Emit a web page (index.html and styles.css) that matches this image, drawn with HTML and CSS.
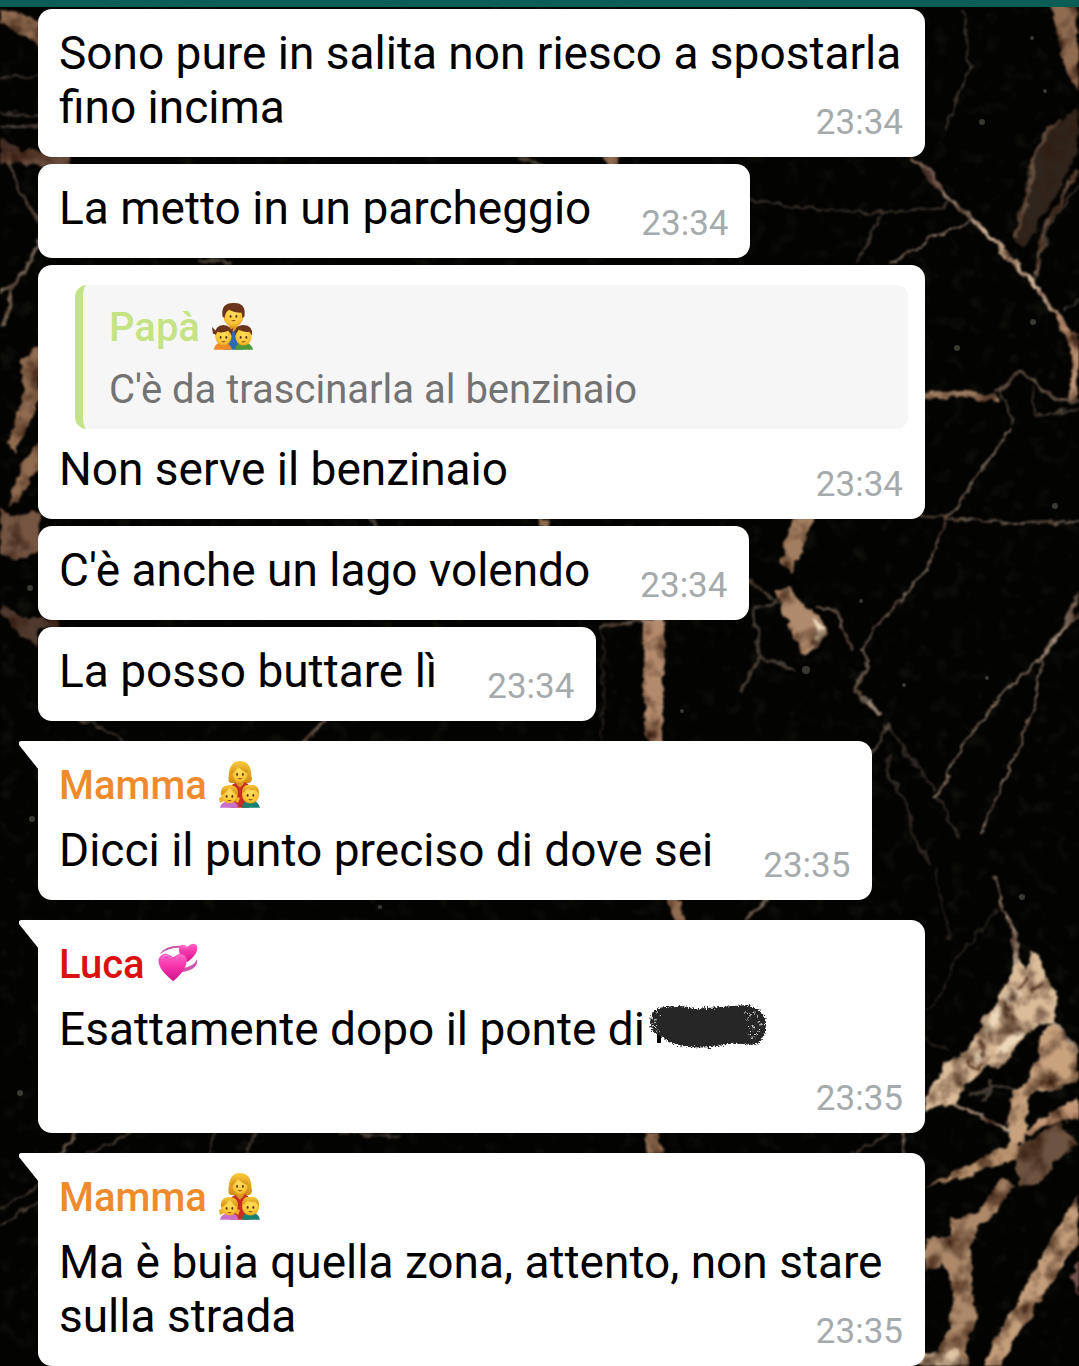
FILE: index.html
```html
<!DOCTYPE html>
<html lang="it">
<head>
	<meta charset="UTF-8">
	<meta name="viewport" content="width=device-width, initial-scale=1">
	<title>Chat</title>
	<link rel="stylesheet" href="styles.css">
</head>
<body>
	<!-- marble wallpaper -->
	<svg class="wallpaper" viewBox="0 0 1079 1366" preserveAspectRatio="xMidYMin slice" aria-hidden="true">
		<defs>
			<filter id="rough" x="0" y="0" width="1079" height="1366" filterUnits="userSpaceOnUse" color-interpolation-filters="sRGB">
				<feTurbulence type="fractalNoise" baseFrequency="0.08" numOctaves="3" seed="4" result="n"/>
				<feDisplacementMap in="SourceGraphic" in2="n" scale="10" xChannelSelector="R" yChannelSelector="G" result="d"/>
				<feTurbulence type="fractalNoise" baseFrequency="0.043" numOctaves="4" seed="9" result="g"/>
				<feColorMatrix in="g" type="matrix" values="0 0 0 0 0.2  0 0 0 0 0.1  0 0 0 0 0.05  2.4 0 0 0 -1.05" result="dark"/>
				<feComposite in="dark" in2="d" operator="in" result="shade"/>
				<feMerge result="m"><feMergeNode in="d"/><feMergeNode in="shade"/></feMerge>
				<feGaussianBlur in="m" stdDeviation="0.9"/>
			</filter>
			<filter id="specks" x="0" y="0" width="1079" height="1366" filterUnits="userSpaceOnUse" color-interpolation-filters="sRGB">
				<feTurbulence type="fractalNoise" baseFrequency="0.06" numOctaves="3" seed="21"/>
				<feColorMatrix type="matrix" values="0 0 0 0 0.2  0 0 0 0 0.2  0 0 0 0 0.15  2 0 0 0 -1.1"/>
				<feGaussianBlur stdDeviation="1"/>
			</filter>
		</defs>
		<rect width="1079" height="1366" fill="#030302"/>
		<rect width="1079" height="1366" filter="url(#specks)" opacity=".4"/>
		<g filter="url(#rough)">
			<g fill="#8f6b50">
				<path d="M1050 5L1076 5L1079 92L1066 70Z"/>
				<path d="M1079 105L1065 118L1045 135L1030 160L1024 195L1012 240L1024 246L1045 212L1060 190L1070 165L1079 150Z" fill="#2f251d"/>
				<path d="M1060 118L1045 135L1034 155L1028 195L1015 238M1077 170L1060 205L1046 225L1036 275" fill="none" stroke="#66503f" stroke-width="4"/>
				<path d="M0 10L20 12L40 24V48L22 34L0 24Z"/>
				<path d="M0 138L20 145L22 158L0 165Z" fill="#49332b"/>
				<path d="M0 154L40 150L70 156V166H40L0 162Z" fill="#684b3b"/>
				<path d="M40 346L22 360L24 390L8 445L16 452L40 398Z"/>
				<path d="M40 440L22 460L8 506L18 502L40 465Z"/>
				<path d="M0 508L14 516L40 512V550L18 562L0 552Z" fill="#745643"/>
				<path d="M0 604L28 618L60 618V628L38 630V646L20 636L0 612Z" fill="#503a2e"/>
				<path d="M794 516L815 516L792 574L779 562Z" fill="#a27d60"/>
				<path d="M777 590L790 587L804 606L820 616L827 632L820 647L803 654L792 640Z" fill="#b08a6c"/>
				<path d="M813 620L824 628L823 642L812 647L818 636Z" fill="#f0dfc2"/>
				<path d="M643 618L665 618L662 742L647 742L642 690Z" fill="#b38a6c"/>
				<path d="M666 898L680 898L686 922L674 922Z"/>
				<path d="M644 1131H658L664 1154H648Z"/>
				<path d="M606 156H622L618 166H608Z"/>
				<path d="M538 519H552L548 527H540Z"/>
			</g>
			<g fill="#dbbd9a">
				<path d="M1016 960L1028 967L1033 951L1042 960L1046 975L1058 998L1056 1022L1036 1026L1020 1040L1003 1065L985 1068L966 1083L957 1103L925 1112V1098L945 1064L965 1050L988 1015L1006 985Z"/>
				<path d="M1040 1032L1056 1022L1079 1055V1078L1060 1088L1030 1094L1024 1144H1008L1012 1092L1030 1080L1039 1056Z" fill="#c8a17d"/>
				<path d="M1079 1098L1050 1112L1022 1132L1030 1134L1060 1122L1079 1120Z" fill="#c79a79"/>
				<path d="M925 1186L962 1170L1000 1148L1016 1142L1018 1158L975 1174Z" fill="#b9926f"/>
				<path d="M1018 1146L1045 1132L1060 1122L1079 1144L1055 1160L1043 1184L1018 1184Z" fill="#6d5440"/>
				<path d="M1000 1177L1014 1186L998 1210L979 1226L970 1250L972 1290L978 1320L966 1336L968 1366H925L938 1352L950 1330L953 1290L944 1262L925 1272V1238L950 1236L950 1218L978 1214Z" fill="#ad896a"/>
				<path d="M1079 1192V1242L1042 1296L1000 1366H982L1012 1310L1045 1250Z" fill="#c49e7b"/>
				<path d="M1079 1250L1072 1280L1079 1295Z" fill="#71504b"/>
				<path d="M925 1352L958 1350L966 1366H920Z" fill="#e0c6a5"/>
			</g>
			<path d="M985 1035L1000 1010L1020 990M1000 1052L1022 1030M975 1062L985 1050" fill="none" stroke="#f5e6c8" stroke-width="8" opacity=".7"/>
			<path d="M1018 988L1028 978M1030 992L1042 984M1004 1002L1010 1012M980 1040L984 1056M966 1062L978 1068L986 1064" fill="none" stroke="#58321e" stroke-width="3" opacity=".8"/>
			<g fill="none" stroke="#b09a86" stroke-linecap="round" stroke-linejoin="round">
				<path stroke-width="4" opacity=".8" d="M912 160L928 168L945 195L975 222"/>
				<path stroke-width="5" stroke="#cfb397" d="M975 222L1010 257L1035 286L1055 312"/>
				<path stroke-width="9" stroke="#bd9274" d="M1058 318L1079 348M1077 350L1072 395"/>
				<path stroke-width="8" stroke="#68493d" opacity=".7" d="M926 170L938 186"/>
				<path stroke-width="2" opacity=".75" d="M890 265L935 236L975 222"/>
				<path stroke-width="2" opacity=".35" d="M752 199L800 208L880 213L945 207L948 195M963 10L970 68L945 130M857 264L880 216M1035 280L1050 225L1079 185M1065 310L1079 300"/>
				<path stroke-width="6" stroke="#9c7b60" d="M922 396L965 394L996 399"/>
				<path stroke-width="4" opacity=".55" d="M996 393L1020 371L1038 384L1055 398L1079 402"/>
				<path stroke-width="2" opacity=".4" d="M1000 388L1012 424M1032 390L1034 415L1079 410"/>
				<path stroke-width="2" opacity=".7" d="M1012 428L985 465L960 500L945 522L928 568L904 596L875 628L862 650"/>
				<path stroke-width="3" opacity=".6" d="M862 650L867 665L854 692L880 713M815 605L836 611L852 650"/>
				<path stroke-width="6" opacity=".8" d="M870 703L880 712"/>
				<path stroke-width="2" opacity=".6" d="M920 516L962 520L1010 523L1079 522"/>
				<path stroke-width="3" opacity=".4" d="M750 582L778 602L754 606L759 656L742 690M759 656L795 669M888 725L872 755"/>
				<path stroke-width="4" opacity=".7" d="M1079 592L1066 625L1042 656"/>
				<path stroke-width="2" opacity=".8" d="M1079 612L1042 656L1002 695L966 740L936 797"/>
				<path stroke-width="2" opacity=".75" d="M1042 660L1033 708L1008 770L981 833"/>
				<path stroke-width="3" opacity=".25" d="M936 797L946 812L957 838M890 755L885 770L903 795L912 830L930 865M888 728L935 790"/>
				<path stroke-width="5" opacity=".9" d="M1008 918L1016 940L1016 964"/>
				<path stroke-width="2" opacity=".8" d="M995 878L1003 908L1008 918"/>
				<path stroke-width="2" opacity=".2" d="M998 910L955 960L945 990L925 1010M935 870L950 940M925 1038L948 1050"/>
				<path stroke-width="4" d="M955 1104L985 1118L1010 1132M1055 1024L1079 1052"/>
				<path stroke-width="3" opacity=".4" d="M970 1096L995 1086L1015 1090M985 1100L992 1080"/>
				<path stroke-width="3" opacity=".5" d="M602 627L640 621L665 621"/>
				<path stroke-width="2" opacity=".2" d="M603 625L602 740"/>
				<path stroke-width="2" opacity=".35" d="M0 78L38 76M0 112L38 116"/>
				<path stroke-width="3" opacity=".45" d="M0 127L38 126M8 155L18 185L38 222"/>
				<path stroke-width="4" opacity=".65" d="M40 240L22 275L12 290L4 325M16 282L0 292"/>
				<path stroke-width="3" opacity=".65" d="M324 719L304 744M768 898L740 922M78 1130L60 1156M904 1130L905 1156"/>
				<path stroke-width="2" opacity=".4" d="M80 721L110 730L125 742M134 1132L88 1154M215 1131L208 1154M255 1132L246 1154M340 1134L400 1136M0 1210L40 1184M0 1226L40 1202M850 1154L888 1135"/>
				<path stroke-width="4" opacity=".4" d="M370 519L378 527M520 158L540 165M200 260L230 262"/>
			</g>
		</g>
		<g fill="#a19d8a" opacity=".35">
			<circle cx="982" cy="122" r="3"/><circle cx="1033" cy="322" r="3"/><circle cx="1055" cy="506" r="3"/><circle cx="1045" cy="91" r="2"/>
			<circle cx="1032" cy="38" r="2"/><circle cx="957" cy="348" r="3"/><circle cx="904" cy="685" r="2"/><circle cx="987" cy="678" r="2"/>
			<circle cx="32" cy="819" r="3"/><circle cx="20" cy="1093" r="3"/><circle cx="682" cy="711" r="2"/><circle cx="1022" cy="897" r="3"/>
			<circle cx="806" cy="670" r="4"/><circle cx="861" cy="601" r="2"/><circle cx="30" cy="588" r="3"/><circle cx="380" cy="907" r="2"/>
		</g>
	</svg>

	<!-- emoji -->
	<svg class="sprite" aria-hidden="true">
		<defs>
			<radialGradient id="skin" cx=".5" cy=".4" r=".65">
				<stop offset="0" stop-color="#ffdf60"/><stop offset=".7" stop-color="#fbc534"/><stop offset="1" stop-color="#dd9416"/>
			</radialGradient>
			<linearGradient id="hair" x1="0" y1="0" x2="0" y2="1">
				<stop offset="0" stop-color="#f9c93a"/><stop offset="1" stop-color="#d08a12"/>
			</linearGradient>
			<linearGradient id="pink" x1="0" y1="0" x2="0" y2="1">
				<stop offset="0" stop-color="#ff62c6"/><stop offset=".5" stop-color="#f531a9"/><stop offset="1" stop-color="#cf128b"/>
			</linearGradient>
			<g id="face">
				<ellipse cx="-3" cy="0" rx="1" ry="1.4" fill="#583313"/>
				<ellipse cx="3" cy="0" rx="1" ry="1.4" fill="#583313"/>
				<path d="M-2.6 4Q0 6.4 2.6 4Z" fill="#7b3b13"/>
			</g>
			<symbol id="father" viewBox="0 0 44 50">
				<path d="M12 50V32Q14 26 22 26T32 32V50Z" fill="#2d69b7"/>
				<path d="M18 21H27V27L22 31L18 27Z" fill="#dc9b22"/>
				<ellipse cx="22.500" cy="14" rx="10.500" ry="12" fill="url(#skin)"/>
				<path d="M11 15Q9 1 22 1Q36 0 34 15L32 17L31 11Q23 11 18 8Q14 10 13 17Z" fill="#6b351b"/>
				<use href="#face" x="22.500" y="15"/>
				<path d="M2 50Q3 42 11 42T21 50Z" fill="#f28a28"/>
				<path d="M24 50Q25 42 33 42T43 50Z" fill="#4f9b3a"/>
				<path d="M4 30L0 26L1 33L5 34M18 30L22 27L21 33Z" fill="#6b351b"/>
				<ellipse cx="12" cy="36" rx="8.500" ry="9.500" fill="url(#skin)"/>
				<path d="M3 35Q3 24 12 24T21 35L17 30Q10 33 6 31Z" fill="#6b351b"/>
				<ellipse cx="33" cy="36" rx="8.500" ry="9.500" fill="url(#skin)"/>
				<path d="M24 35Q23 24 33 24T42 35L39 31Q33 32 28 29Z" fill="#6b351b"/>
				<use href="#face" x="12" y="37"/>
				<use href="#face" x="33" y="37"/>
			</symbol>
			<symbol id="mother" viewBox="0 0 44 50">
				<path d="M10 22Q9 1 22 1Q34 1 34 17Q36 21 32 24H12Z" fill="url(#hair)"/>
				<path d="M12 50V30Q12 24 22 23T32 30V50Z" fill="#c82c23"/>
				<path d="M18 20H26V25L22 29L18 25Z" fill="#d99522"/>
				<ellipse cx="22" cy="14" rx="8" ry="10" fill="url(#skin)"/>
				<path d="M13 15Q12 4 20 3Q30 2 31 14Q24 12 20 7Q17 12 13 15Z" fill="url(#hair)"/>
				<use href="#face" x="22" y="15"/>
				<path d="M1 50Q2 43 11 43T20 50Z" fill="#c970ce"/>
				<path d="M24 50Q25 42 33 42T43 50Z" fill="#17816f"/>
				<path d="M3 38L0 40L1 45L5 43M18 38L22 40L20 45L17 43Z" fill="#eab027"/>
				<ellipse cx="11" cy="36" rx="8.500" ry="9.500" fill="url(#skin)"/>
				<path d="M2 37Q1 26 11 26T20 37Q15 35 11 28Q8 35 2 37Z" fill="url(#hair)"/>
				<ellipse cx="33" cy="36" rx="9" ry="9.500" fill="url(#skin)"/>
				<path d="M24 35Q24 25 33 26Q42 25 42 35L38 31Q34 32 30 30Z" fill="url(#hair)"/>
				<use href="#face" x="11" y="38"/>
				<use href="#face" x="33" y="37"/>
			</symbol>
			<symbol id="hearts" viewBox="0 0 44 50">
				<path d="M3 15Q10 6 25 7L24 9Q12 9 4 15Z" fill="#c85aa9"/>
				<path d="M42 21Q44 33 22 35L24 31Q39 29 42 21Z" fill="#d154a8"/>
				<path d="M32 24Q22 17 23 10Q25 3 32 8Q38 2 42 7Q44 15 32 24Z" fill="url(#pink)"/>
				<path d="M17 44Q-1 30 2 20Q7 11 17 19Q27 11 31 20Q33 31 17 44Z" fill="url(#pink)"/>
				<path d="M5 20Q9 14 15 20M20 20Q25 15 29 20M26 9Q29 6 32 10" fill="none" stroke="#ff9adb" stroke-width="1" opacity=".7"/>
			</symbol>
		</defs>
	</svg>

	<header class="topbar"></header>
	<main class="chat">
		<article class="bubble">
			<p class="text">Sono pure in salita non riesco a spostarla fino incima<time class="time">23:34</time></p>
		</article>
		<article class="bubble">
			<p class="text">La metto in un parcheggio<time class="time">23:34</time></p>
		</article>
		<article class="bubble bubble-wide">
			<blockquote class="quote">
				<h3 class="name papa">Papà <svg class="emoji" role="img" aria-label="👨‍👧‍👦"><use href="#father"/></svg></h3>
				<p class="quote-text">C'è da trascinarla al benzinaio</p>
			</blockquote>
			<p class="text">Non serve il benzinaio<time class="time">23:34</time></p>
		</article>
		<article class="bubble">
			<p class="text">C'è anche un lago volendo<time class="time">23:34</time></p>
		</article>
		<article class="bubble">
			<p class="text">La posso buttare lì<time class="time">23:34</time></p>
		</article>
		<article class="bubble first">
			<h2 class="name mamma">Mamma <svg class="emoji" role="img" aria-label="👩‍👧‍👦"><use href="#mother"/></svg></h2>
			<p class="text">Dicci il punto preciso di dove sei<time class="time">23:35</time></p>
		</article>
		<article class="bubble first">
			<h2 class="name luca">Luca <svg class="emoji" role="img" aria-label="💞"><use href="#hearts"/></svg></h2>
			<p class="text">Esattamente dopo il ponte di<svg class="scribble" viewBox="4 0 122 46" aria-hidden="true">
				<defs>
					<filter id="grain" x="-5%" y="-10%" width="110%" height="120%">
						<feTurbulence type="fractalNoise" baseFrequency="0.6" numOctaves="2" seed="3"/>
						<feDisplacementMap in="SourceGraphic" scale="6" xChannelSelector="R" yChannelSelector="G"/>
					</filter>
				</defs>
				<rect x="16" y="12" width="4" height="28" fill="#000"/>
				<path d="M119 20Q123 38 111 39Q105 40 101 37" fill="none" stroke="#080808" stroke-width="3"/>
				<g filter="url(#grain)">
					<path d="M9 19Q10 4 25 4Q42 1 53 6Q80 4 105 2Q124 6 125 20Q125 37 114 42Q96 40 86 41Q65 47 42 43Q26 40 22 34Q9 30 9 19Z" fill="#262626"/>
					<path d="M11 14L16 18L11 22L16 27M15 9L20 12M14 24L18 30M104 10L110 12L106 17M113 9L118 15M117 18L121 23M107 25L113 22L111 30L106 32M118 27L114 34M110 35L116 31" fill="none" stroke="#ccc" stroke-width="1.500" stroke-dasharray="2 2"/>
				</g>
			</svg><time class="time">23:35</time></p>
		</article>
		<article class="bubble first">
			<h2 class="name mamma">Mamma <svg class="emoji" role="img" aria-label="👩‍👧‍👦"><use href="#mother"/></svg></h2>
			<p class="text">Ma è buia quella zona, attento, non stare sulla strada<time class="time">23:35</time></p>
		</article>
	</main>
</body>
</html>
```

FILE: styles.css
```css
*{
	box-sizing: border-box;
}
body{
	margin: 0;
	position: relative;
	overflow-x: hidden;
	background: #030302;
	font-family: Roboto, "Liberation Sans", sans-serif;
}
h2,h3,p,blockquote{
	margin: 0;
}
.wallpaper{
	position: absolute;
	top: 0;
	left: 0;
	width: 100%;
	height: 100%;
	z-index: -1;
}
.sprite{
	position: absolute;
	width: 0;
	height: 0;
}
.topbar{
	height: 7px;
	background: #0b5e55;
}
.chat{
	display: flex;
	flex-direction: column;
	align-items: flex-start;
	gap: 7px;
	padding: 2px 154px 0 38px;
}
.bubble{
	position: relative;
	max-width: 100%;
	padding: 17px 22px 17px 21px;
	border-radius: 14px;
	background: #fff;
}
.bubble-wide{
	width: 100%;
	padding-top: 20px;
}
.first{
	margin-top: 13px;
	border-top-left-radius: 0;
}
/* little tail at the top left of a sender's first message */
.first::before{
	content: "";
	position: absolute;
	top: 0;
	left: -20px;
	width: 21px;
	height: 29px;
	background: #fff;
	clip-path: polygon(3px 0, 100% 0, 100% 100%, 1px 4px, 1px 1px);
}
.text{
	display: flow-root;
	color: #000;
	font-size: 46px;
	line-height: 54px;
}
/* sits on the last line, or drops below it when there is no room */
.time{
	float: right;
	margin: 25px 0 0 50px;
	color: #a5aaac;
	font-size: 35px;
	line-height: 35px;
}
.name{
	height: 65px;
	font-size: 40px;
	font-weight: 500;
	line-height: 55px;
}
.papa{
	color: #c5e384;
}
.mamma{
	color: #f08b2d;
}
.luca{
	color: #dd1011;
}
.emoji{
	width: 42px;
	height: 48px;
	margin-left: 2px;
	vertical-align: -9px;
}
.quote{
	margin: 0 -5px 13px 16px;
	padding: 15px 26px 12px;
	border-left: 8px solid #c5e384;
	border-radius: 12px;
	background: #f6f6f6;
}
.quote .name{
	height: 62px;
}
.quote-text{
	color: #737373;
	font-size: 40px;
	line-height: 55px;
}
.scribble{
	width: 122px;
	height: 46px;
	vertical-align: -4px;
}
```
